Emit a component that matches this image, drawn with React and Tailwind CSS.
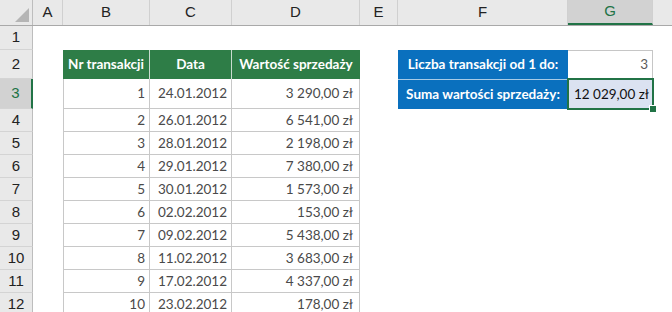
const COLS = [
  { key: 'hdr', w: 'w-[33px]' },
  { key: 'A', w: 'w-[30px]' },
  { key: 'B', w: 'w-[87px]' },
  { key: 'C', w: 'w-[82px]' },
  { key: 'D', w: 'w-[128px]' },
  { key: 'E', w: 'w-[38px]' },
  { key: 'F', w: 'w-[170px]' },
  { key: 'G', w: 'w-[85px]' },
]

const DATA = [
  [1, '24.01.2012', '3 290,00 zł'],
  [2, '26.01.2012', '6 541,00 zł'],
  [3, '28.01.2012', '2 198,00 zł'],
  [4, '29.01.2012', '7 380,00 zł'],
  [5, '30.01.2012', '1 573,00 zł'],
  [6, '02.02.2012', '153,00 zł'],
  [7, '09.02.2012', '5 438,00 zł'],
  [8, '11.02.2012', '3 683,00 zł'],
  [9, '17.02.2012', '4 337,00 zł'],
  [10, '23.02.2012', '178,00 zł'],
]

const cell = "font-['Lato','Liberation_Sans',sans-serif] text-[13.5px]"

function RowHeader({ n, active }) {
  return (
    <div
      className={`w-[33px] shrink-0 flex items-center justify-center border-b border-[#d4d4d4] font-['Liberation_Sans',Arial,sans-serif] text-[15px] ${
        active
          ? 'bg-[#d2d2d2] text-[#217346] border-r-2 border-r-[#217346]'
          : 'bg-[#e9e9e9] text-[#222] border-r border-r-[#bdbdbd]'
      }`}
    >
      {n}
    </div>
  )
}

function Blank({ w }) {
  return <div className={`${w} shrink-0`} />
}

export default function App() {
  return (
    <div className="w-[672px] h-[312px] overflow-hidden bg-white relative select-none">
      {/* column headers */}
      <div className="flex h-[26px] bg-[#e9e9e9] border-b border-[#a9a9a9] font-['Liberation_Sans',Arial,sans-serif] text-[15px] text-[#222]">
        <div className="w-[33px] shrink-0 border-r border-[#bdbdbd] flex items-end justify-end p-[3px]">
          <svg width="14" height="14" viewBox="0 0 14 14">
            <polygon points="14,0 14,14 0,14" fill="#b5b5b5" />
          </svg>
        </div>
        {COLS.slice(1).map((c) => (
          <div
            key={c.key}
            className={`${c.w} shrink-0 flex items-center justify-center border-r border-[#d0d0d0] ${
              c.key === 'G' ? 'bg-[#d2d2d2] text-[#217346] border-b-2 border-b-[#217346]' : ''
            }`}
          >
            {c.key}
          </div>
        ))}
        <div className="flex-1" />
      </div>

      {/* row 1 */}
      <div className="flex h-[24px]">
        <RowHeader n={1} />
      </div>

      {/* row 2 */}
      <div className="flex h-[29px]">
        <RowHeader n={2} />
        <Blank w="w-[30px]" />
        <div className="w-[87px] shrink-0 bg-[#2e7d47] border-r border-[#c9dccf] flex items-center justify-center font-['Lato',sans-serif] font-bold text-[13.5px] text-white">
          Nr transakcji
        </div>
        <div className="w-[82px] shrink-0 bg-[#2e7d47] border-r border-[#c9dccf] flex items-center justify-center font-['Lato',sans-serif] font-bold text-[13.5px] text-white">
          Data
        </div>
        <div className="w-[128px] shrink-0 bg-[#2e7d47] flex items-center justify-center font-['Lato',sans-serif] font-bold text-[13.5px] text-white">
          Wartość sprzedaży
        </div>
        <Blank w="w-[38px]" />
        <div className="w-[170px] shrink-0 bg-[#0a70be] flex items-center justify-center font-['Lato',sans-serif] font-bold text-[13.5px] text-white">
          Liczba transakcji od 1 do:
        </div>
        <div className={`w-[85px] shrink-0 border border-l-0 border-[#c6c6c6] flex items-center justify-end pr-[4px] ${cell} text-[#5a5a5a]`}>
          3
        </div>
      </div>

      {/* data rows */}
      {DATA.map(([n, d, v], i) => (
        <div key={n} className={`flex ${i === 0 ? 'h-[30px]' : 'h-[23px]'}`}>
          <RowHeader n={i + 3} active={i === 0} />
          <Blank w="w-[30px]" />
          <div className={`w-[87px] shrink-0 border-l border-r border-b border-[#c8c8c8] flex items-center justify-end pr-[4px] ${cell} text-[#4a4a4a]`}>
            {n}
          </div>
          <div className={`w-[82px] shrink-0 border-r border-b border-[#c8c8c8] flex items-center justify-end pr-[4px] ${cell} text-[#4a4a4a]`}>
            {d}
          </div>
          <div className={`w-[128px] shrink-0 border-r border-b border-[#c8c8c8] flex items-center justify-end pr-[6px] ${cell} text-[#4a4a4a]`}>
            {v}
          </div>
          {i === 0 && (
            <>
              <Blank w="w-[38px]" />
              <div className="w-[170px] shrink-0 bg-[#0a70be] border-t border-[#a9cbe6] flex items-center justify-center font-['Lato',sans-serif] font-bold text-[13.5px] text-white">
                Suma wartości sprzedaży:
              </div>
              <div className={`w-[85px] shrink-0 bg-[#dbe2f1] flex items-center justify-end pr-[4px] ${cell} text-[#111]`}>
                12 029,00 zł
              </div>
            </>
          )}
        </div>
      ))}

      {/* active cell selection G3 */}
      <div className="absolute left-[567px] top-[78px] w-[87px] h-[32px] border-2 border-[#217346] pointer-events-none">
        <div className="absolute -right-[4px] -bottom-[4px] w-[6px] h-[6px] bg-[#217346] ring-1 ring-white" />
      </div>
    </div>
  )
}
